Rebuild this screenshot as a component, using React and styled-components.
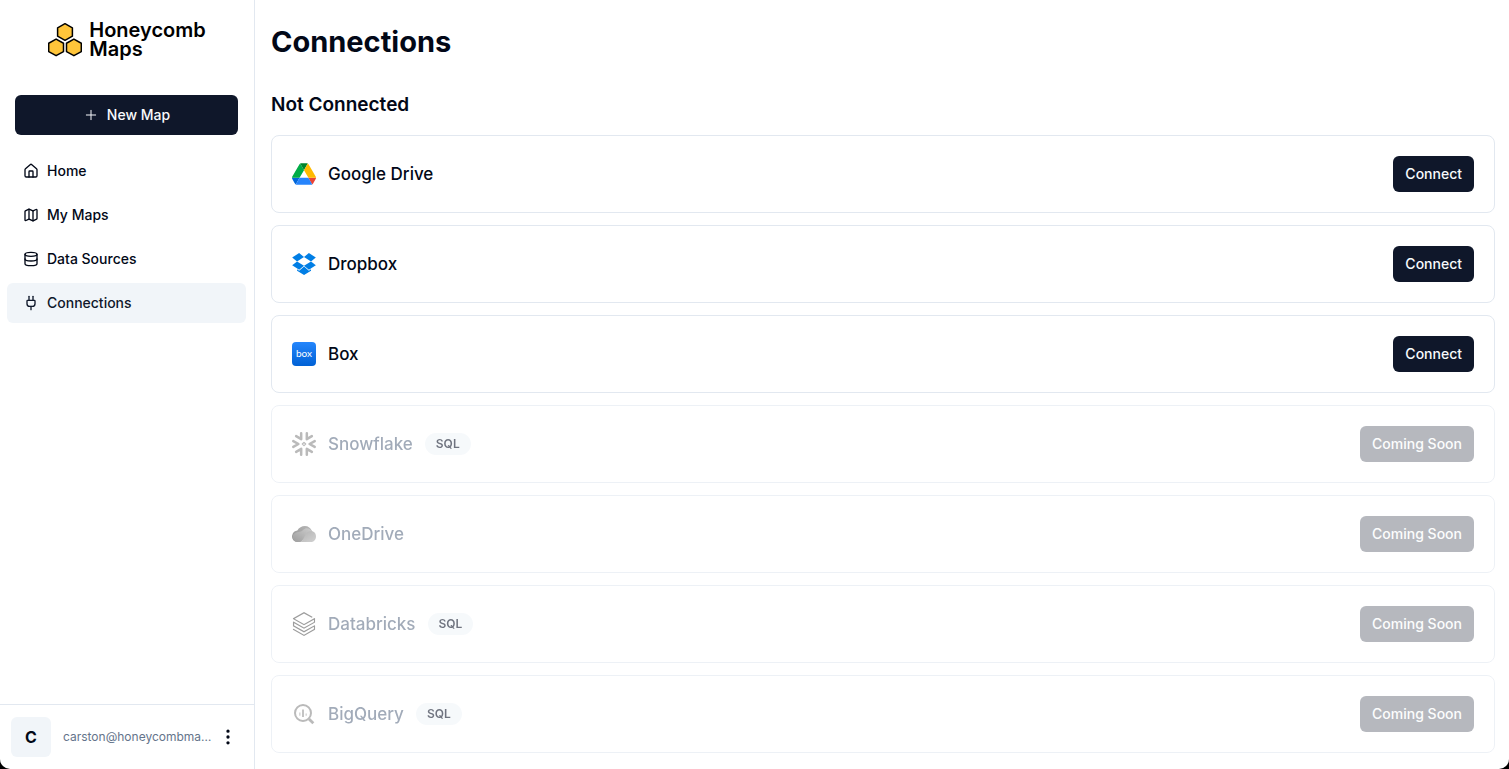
import React from 'react';
import styled, { createGlobalStyle } from 'styled-components';
import { House, Map, Database, Plug, Plus, EllipsisVertical } from 'lucide-react';
import { SiDatabricks } from 'react-icons/si';

const GlobalStyle = createGlobalStyle`
  *, *::before, *::after { box-sizing: border-box; }
  html { background: #000; }
  body {
    margin: 0;
    color: #020817;
    font-family: Inter, 'Liberation Sans', sans-serif;
    font-size: 14px;
    line-height: 20px;
  }
  h1, h2, h3, p, ul { margin: 0; padding: 0; }
  button { font: inherit; border: 0; cursor: pointer; }
`;

const Shell = styled.div`
  display: flex;
  min-height: 100vh;
  overflow: hidden;
  background: #fff;
  border-radius: 0 0 10px 10px;
`;

const Sidebar = styled.aside`
  display: flex;
  flex-direction: column;
  flex: none;
  width: 255px;
  border-right: 1px solid #e2e8f0;
`;

const Brand = styled.a`
  display: flex;
  align-items: center;
  justify-content: center;
  gap: 7px;
  height: 80px;
  color: #000;
  font-size: 20px;
  font-weight: 600;
  line-height: 19px;
  text-decoration: none;
`;

const NewMapButton = styled.button`
  display: flex;
  align-items: center;
  justify-content: center;
  gap: 8px;
  height: 40px;
  margin: 15px 16px 16px 15px;
  border-radius: 6px;
  background: #0f172a;
  color: #f8fafc;
  font-weight: 500;
`;

const NavList = styled.ul`
  display: flex;
  flex-direction: column;
  gap: 4px;
  padding: 0 8px 0 7px;
  list-style: none;
`;

const NavLink = styled.a`
  display: flex;
  align-items: center;
  gap: 8px;
  height: 40px;
  padding: 0 16px;
  border-radius: 6px;
  background: ${({ $active }) => ($active ? '#f1f5f9' : 'transparent')};
  color: ${({ $active }) => ($active ? '#0f172a' : '#020817')};
  font-weight: 500;
  text-decoration: none;
`;

const Account = styled.div`
  display: flex;
  align-items: center;
  gap: 12px;
  height: 65px;
  margin-top: auto;
  padding: 0 16px 0 11px;
  border-top: 1px solid #e2e8f0;
`;

const Avatar = styled.div`
  display: grid;
  place-items: center;
  flex: none;
  width: 40px;
  height: 40px;
  border-radius: 6px;
  background: #f1f5f9;
  font-size: 16px;
  font-weight: 700;
`;

const Email = styled.p`
  flex: 1;
  min-width: 0;
  overflow: hidden;
  color: #64748b;
  font-size: 12px;
  text-overflow: ellipsis;
  white-space: nowrap;
`;

const MenuButton = styled.button`
  display: grid;
  place-items: center;
  flex: none;
  width: 20px;
  height: 32px;
  margin-left: -8px;
  padding: 0;
  background: transparent;
  color: #020817;
`;

const Main = styled.main`
  flex: 1;
  min-width: 0;
  padding: 24px 14px 16px 16px;
`;

const PageTitle = styled.h1`
  font-size: 29px;
  font-weight: 700;
  line-height: 35px;
`;

const SectionTitle = styled.h2`
  margin: 32px 0 16px;
  font-size: 19px;
  font-weight: 600;
  line-height: 28px;
`;

const CardList = styled.ul`
  display: flex;
  flex-direction: column;
  gap: 12px;
  list-style: none;
`;

const Card = styled.li`
  display: flex;
  align-items: center;
  gap: 12px;
  padding: 20px;
  border: 1px solid #e2e8f0;
  border-radius: 8px;
  color: ${({ $soon }) => ($soon ? '#64748b' : '#020817')};
  opacity: ${({ $soon }) => ($soon ? 0.6 : 1)};
`;

const IconSlot = styled.span`
  display: grid;
  place-items: center;
  width: 24px;
  height: 24px;
  filter: ${({ $soon }) => ($soon ? 'grayscale(1)' : 'none')};
`;

const CardTitle = styled.h3`
  font-size: 17px;
  font-weight: 500;
  line-height: 28px;
`;

const Badge = styled.span`
  padding: 3px 11px;
  border-radius: 11px;
  background: #f1f5f9;
  color: #0f172a;
  font-size: 12px;
  font-weight: 600;
  line-height: 16px;
`;

const ActionButton = styled.button`
  height: 36px;
  margin-left: auto;
  padding: 0 12px;
  border-radius: 6px;
  background: #0f172a;
  color: #f8fafc;
  font-weight: 500;

  &:disabled {
    opacity: 0.5;
    cursor: default;
  }
`;

const hexagon = 'M0-8.3 7.4-4.15V4.15L0 8.3-7.4 4.15V-4.15Z';

const HoneycombLogo = () => (
  <svg width="34" height="34" viewBox="0 0 34 34" fill="#ffc53a" stroke="#000" strokeWidth="1.5" strokeLinejoin="round" aria-hidden="true">
    <path d={hexagon} transform="translate(17 9)" />
    <path d={hexagon} transform="translate(8.1 24.4)" />
    <path d={hexagon} transform="translate(25.9 24.4)" />
  </svg>
);

const GoogleDriveIcon = () => (
  <svg width="24" height="22" viewBox="0 0 87.3 78" aria-hidden="true">
    <path d="m6.6 66.85 3.85 6.65c.8 1.4 1.95 2.5 3.3 3.3l13.75-23.8h-27.5c0 1.55.4 3.1 1.2 4.5z" fill="#0066da" />
    <path d="m43.65 25-13.75-23.8c-1.35.8-2.5 1.9-3.3 3.3l-25.4 44a9.06 9.06 0 0 0 -1.2 4.5h27.5z" fill="#00ac47" />
    <path d="m73.55 76.8c1.35-.8 2.5-1.9 3.3-3.3l1.6-2.75 7.65-13.25c.8-1.4 1.2-2.95 1.2-4.5h-27.502l5.852 11.5z" fill="#ea4335" />
    <path d="m43.65 25 13.75-23.8c-1.35-.8-2.9-1.2-4.5-1.2h-18.5c-1.6 0-3.15.45-4.5 1.2z" fill="#00832d" />
    <path d="m59.8 53h-32.3l-13.75 23.8c1.35.8 2.9 1.2 4.5 1.2h50.8c1.6 0 3.15-.45 4.5-1.2z" fill="#2684fc" />
    <path d="m73.4 26.5-12.7-22c-.8-1.4-1.95-2.5-3.3-3.3l-13.75 23.8 16.15 28h27.45c0-1.55-.4-3.1-1.2-4.5z" fill="#ffba00" />
  </svg>
);

const DropboxIcon = () => (
  <svg width="24" height="22" viewBox="0 0 42.4 39.5" fill="#007ee5" aria-hidden="true">
    <path d="M12.5 0 0 8.1l8.7 7 12.5-7.8Z" />
    <path d="m0 21.9 12.5 8.2 8.7-7.3-12.5-7.7Z" />
    <path d="m21.2 22.8 8.8 7.3 12.4-8.1-8.6-6.9Z" />
    <path d="M42.4 8.1 30 0l-8.8 7.3 12.6 7.8Z" />
    <path d="m21.3 24.4-8.8 7.3-3.7-2.5V32l12.5 7.5L33.8 32v-2.8L30 31.7Z" />
  </svg>
);

const BoxTile = styled.span`
  display: grid;
  place-items: center;
  width: 24px;
  height: 24px;
  padding-bottom: 2px;
  border-radius: 4px;
  background: linear-gradient(#2486fc, #0061d5);
  color: #fff;
  font-family: Lato, sans-serif;
  font-size: 10px;
  font-weight: 400;
  line-height: 12px;
`;

const SnowflakeIcon = () => (
  <svg width="24" height="24" viewBox="-12 -12 24 24" fill="none" stroke="#8c8c8c" strokeLinecap="round" strokeLinejoin="round" aria-hidden="true">
    {[0, 60, 120, 180, 240, 300].map((angle) => (
      <path key={angle} d="M10.700-2.900 5.600 0l5.100 2.900" strokeWidth="2.500" transform={`rotate(${angle})`} />
    ))}
    <path d="M0-1.700 1.700 0 0 1.700-1.700 0Z" strokeWidth="1.200" />
  </svg>
);

const OneDriveIcon = () => (
  <svg width="24" height="16" viewBox="0 0 24 16" aria-hidden="true">
    <defs>
      <linearGradient id="od-back" x1="0" y1="1" x2="1" y2="0">
        <stop offset="0" stopColor="#484848" />
        <stop offset="1" stopColor="#8a8a8a" />
      </linearGradient>
      <linearGradient id="od-mid" x1="0" y1="1" x2="1" y2="0">
        <stop offset="0" stopColor="#5c5c5c" />
        <stop offset="1" stopColor="#acacac" />
      </linearGradient>
      <linearGradient id="od-front" x1="0" y1="0" x2="1" y2="1">
        <stop offset="0" stopColor="#808080" />
        <stop offset="1" stopColor="#b4b4b4" />
      </linearGradient>
    </defs>
    <path d="M5.500 16A5.500 5.500 0 0 1 .2 9.200C.8 6.300 3 4.800 5.300 4.600 7 1.600 9.800 0 12.800 0c3.400 0 6.100 2 7.100 5L12 12Z" fill="url(#od-back)" />
    <path d="M5.500 16C2.300 16 .7 13.400.7 11.300.7 8 3.300 6.200 6.300 6c2-.1 3.300-.6 4.700-2C13.800 1.200 17.500 2 19.900 5L9 16Z" fill="url(#od-mid)" />
    <path d="M8 16c1.900-.8 3.100-2.500 4.200-4.700C13.800 7.800 15.800 5 19 5c2.900 0 5 2.400 5 5.400 0 3.200-2.300 5.600-5.300 5.600Z" fill="url(#od-front)" />
  </svg>
);

const BigQueryIcon = () => (
  <svg width="24" height="24" viewBox="0 0 24 24" fill="none" stroke="#8c8c8c" aria-hidden="true">
    <circle cx="11" cy="11" r="8" strokeWidth="2" />
    <path d="m17 17 4.300 4.300" strokeWidth="2.800" />
    <path d="M11 7.500v7.500" strokeWidth="1.700" />
    <path d="M7.800 10.500v3.200M14.200 11.500v2.200" strokeWidth="1.400" stroke="#b9b9b9" />
  </svg>
);

const navItems = [
  { label: 'Home', Icon: House },
  { label: 'My Maps', Icon: Map },
  { label: 'Data Sources', Icon: Database },
  { label: 'Connections', Icon: Plug, active: true },
];

const services = [
  { name: 'Google Drive', icon: <GoogleDriveIcon /> },
  { name: 'Dropbox', icon: <DropboxIcon /> },
  { name: 'Box', icon: <BoxTile aria-hidden="true">box</BoxTile> },
  { name: 'Snowflake', icon: <SnowflakeIcon />, sql: true, soon: true },
  { name: 'OneDrive', icon: <OneDriveIcon />, soon: true },
  { name: 'Databricks', icon: <SiDatabricks size={24} color="#5c5c5c" />, sql: true, soon: true },
  { name: 'BigQuery', icon: <BigQueryIcon />, sql: true, soon: true },
];

export default function App() {
  return (
    <>
      <GlobalStyle />
      <Shell>
        <Sidebar>
          <Brand href="#">
            <HoneycombLogo />
            <span>Honeycomb<br />Maps</span>
          </Brand>
          <NewMapButton type="button">
            <Plus size={16} strokeWidth={1.5} />
            New Map
          </NewMapButton>
          <nav>
            <NavList>
              {navItems.map(({ label, Icon, active }) => (
                <li key={label}>
                  <NavLink href="#" $active={active} aria-current={active ? 'page' : undefined}>
                    <Icon size={16} />
                    {label}
                  </NavLink>
                </li>
              ))}
            </NavList>
          </nav>
          <Account>
            <Avatar>C</Avatar>
            <Email>carston@honeycombmaps.com</Email>
            <MenuButton type="button" aria-label="Account menu">
              <EllipsisVertical size={20} />
            </MenuButton>
          </Account>
        </Sidebar>
        <Main>
          <PageTitle>Connections</PageTitle>
          <SectionTitle>Not Connected</SectionTitle>
          <CardList>
            {services.map(({ name, icon, sql, soon }) => (
              <Card key={name} $soon={soon}>
                <IconSlot $soon={soon}>{icon}</IconSlot>
                <CardTitle>{name}</CardTitle>
                {sql && <Badge>SQL</Badge>}
                <ActionButton type="button" disabled={soon}>
                  {soon ? 'Coming Soon' : 'Connect'}
                </ActionButton>
              </Card>
            ))}
          </CardList>
        </Main>
      </Shell>
    </>
  );
}
